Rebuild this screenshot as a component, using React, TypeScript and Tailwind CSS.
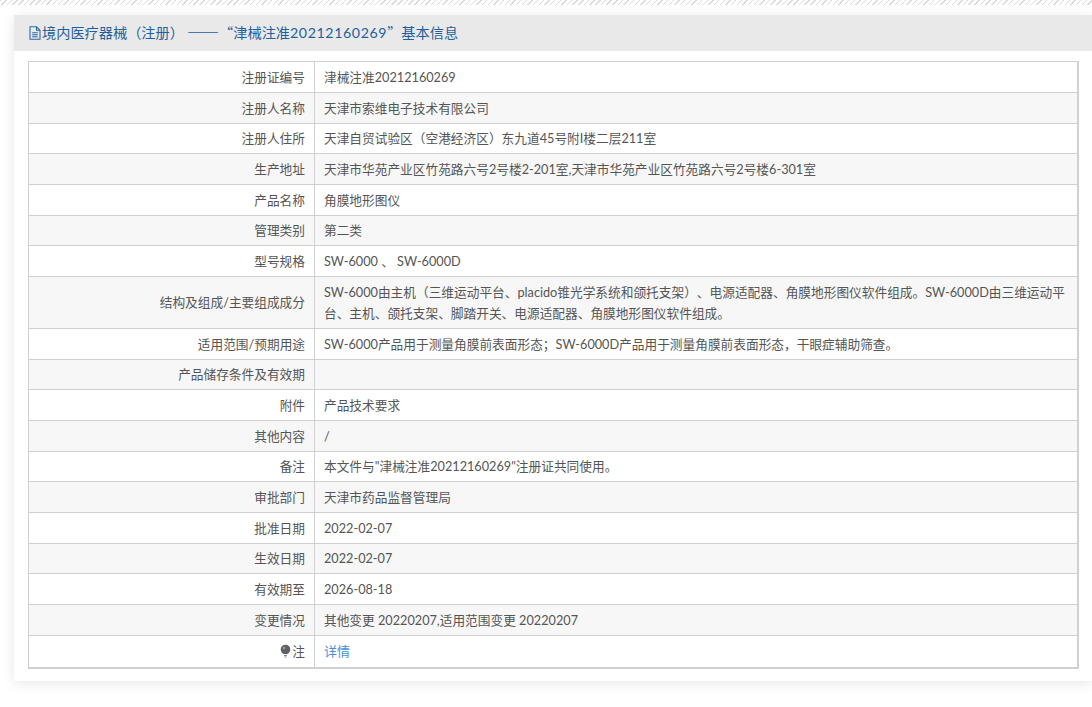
const ROWS: { label: string; value: string; height: string }[] = [
  { label: "注册证编号", value: "津械注准20212160269", height: "h-[31px]" },
  { label: "注册人名称", value: "天津市索维电子技术有限公司", height: "h-[31px]" },
  { label: "注册人住所", value: "天津自贸试验区（空港经济区）东九道45号附I楼二层211室", height: "h-[30px]" },
  { label: "生产地址", value: "天津市华苑产业区竹苑路六号2号楼2-201室,天津市华苑产业区竹苑路六号2号楼6-301室", height: "h-[31px]" },
  { label: "产品名称", value: "角膜地形图仪", height: "h-[31px]" },
  { label: "管理类别", value: "第二类", height: "h-[30px]" },
  { label: "型号规格", value: "SW-6000 、 SW-6000D", height: "h-[31px]" },
  {
    label: "结构及组成/主要组成成分",
    value:
      "SW-6000由主机（三维运动平台、placido锥光学系统和颌托支架）、电源适配器、角膜地形图仪软件组成。SW-6000D由三维运动平台、主机、颌托支架、脚踏开关、电源适配器、角膜地形图仪软件组成。",
    height: "h-[52px]",
  },
  { label: "适用范围/预期用途", value: "SW-6000产品用于测量角膜前表面形态；SW-6000D产品用于测量角膜前表面形态，干眼症辅助筛查。", height: "h-[31px]" },
  { label: "产品储存条件及有效期", value: "", height: "h-[30px]" },
  { label: "附件", value: "产品技术要求", height: "h-[31px]" },
  { label: "其他内容", value: "/", height: "h-[31px]" },
  { label: "备注", value: "本文件与\"津械注准20212160269\"注册证共同使用。", height: "h-[30px]" },
  { label: "审批部门", value: "天津市药品监督管理局", height: "h-[31px]" },
  { label: "批准日期", value: "2022-02-07", height: "h-[31px]" },
  { label: "生效日期", value: "2022-02-07", height: "h-[30px]" },
  { label: "有效期至", value: "2026-08-18", height: "h-[31px]" },
  { label: "变更情况", value: "其他变更 20220207,适用范围变更 20220207", height: "h-[31px]" },
];

function FileIcon() {
  return (
    <svg width="12" height="14" viewBox="0 0 12 14" fill="none" stroke="#2a6aa8" strokeWidth="1.1" className="mr-px shrink-0">
      <path d="M1 .8h6.5L11 4.3v8.9H1z" />
      <path d="M7.5 .8v3.5H11M3.2 6.8h5.6M3.2 8.8h5.6M3.2 10.8h5.6" />
    </svg>
  );
}

function BulbIcon() {
  return (
    <svg width="11" height="14" viewBox="0 0 11 14" className="mr-px inline-block align-[-2px]">
      <circle cx="5.5" cy="5.5" r="4.8" fill="#5f6368" />
      <circle cx="4" cy="4" r="1.2" fill="#9a9da1" />
      <path d="M4 11h3v1H4zM4.5 12.5h2v1h-2z" fill="#8a8d91" />
    </svg>
  );
}

export default function App() {
  return (
    <div
      lang="zh-CN"
      className="h-[707px] w-[1092px] overflow-hidden bg-white font-['Lato','Noto_Sans_CJK_SC',sans-serif] text-[12.7px] text-[#555] [text-spacing-trim:space-all]"
    >
      <div className="h-[5px] bg-[repeating-linear-gradient(135deg,#d9d9d9_0px,#d9d9d9_1px,#ffffff_1px,#ffffff_4px)]" />
      <div className="ml-[14px] mt-[10px] w-[1078px] bg-white pb-[12px] shadow-[0_2px_12px_rgba(0,0,0,0.1)]">
        <div className="flex h-[36px] items-center bg-[#e9e9e9] pl-[15px] text-[14.2px] text-[#1f5f9e]">
          <FileIcon />
          <span>
            <span className="font-['Noto_Sans_CJK_SC',sans-serif]">境内医疗器械（注册） </span>
            <span className="font-['Noto_Sans_CJK_SC',sans-serif] text-[16px] leading-none">——</span>
            <span className="font-['Noto_Sans_CJK_SC',sans-serif]">“津械注准</span>
            <span className="tracking-[0.6px]">20212160269</span>
            <span className="font-['Noto_Sans_CJK_SC',sans-serif]">”基本信息</span>
          </span>
        </div>
        <table className="ml-[14px] mt-[10px] w-[1051px] table-fixed border-separate border-spacing-0 border-t border-r-2 border-b-2 border-l border-[#d0d0d0]">
          <tbody>
            {ROWS.map((row, i) => (
              <tr key={row.label} className={i % 2 === 1 ? "bg-[#f7f7f7]" : "bg-white"}>
                <td className={`w-[286px] border-r border-b border-[#d0d0d0] pr-[9px] text-right leading-[21px] ${row.height}`}>
                  {row.label}
                </td>
                <td className="border-b border-[#d0d0d0] px-[9px] leading-[21px]">{row.value}</td>
              </tr>
            ))}
            <tr>
              <td className="h-[31px] w-[286px] border-r border-[#d0d0d0] pr-[9px] pt-px text-right">
                <BulbIcon />注
              </td>
              <td className="px-[9px] pt-px text-[13px] text-[#4a90d9]">详情</td>
            </tr>
          </tbody>
        </table>
      </div>
    </div>
  );
}
